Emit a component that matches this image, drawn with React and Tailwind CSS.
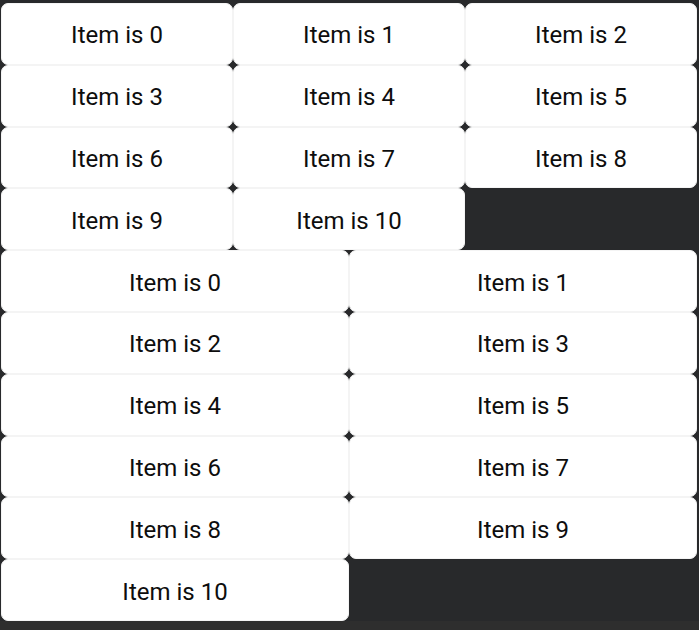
const items = Array.from({ length: 11 }, (_, i) => i);

const Cell = ({ n }) => (
  <div className="h-[61.8px] flex items-center justify-center pt-[3px] bg-white rounded-[7px] border-[0.5px] border-[#f4f4f4] text-[24px] text-[#0d0d0d]">
    Item is {n}
  </div>
);

export default function App() {
  return (
    <div className="min-h-screen bg-[#2e2e2e]" style={{ fontFamily: "Roboto, sans-serif" }}>
      <div className="bg-[#28292b] pt-[3px] pl-[1px] pr-[2px]">
        <div className="grid grid-cols-3">
          {items.map((n) => (
            <Cell key={n} n={n} />
          ))}
        </div>
        <div className="grid grid-cols-2">
          {items.map((n) => (
            <Cell key={n} n={n} />
          ))}
        </div>
      </div>
    </div>
  );
}
